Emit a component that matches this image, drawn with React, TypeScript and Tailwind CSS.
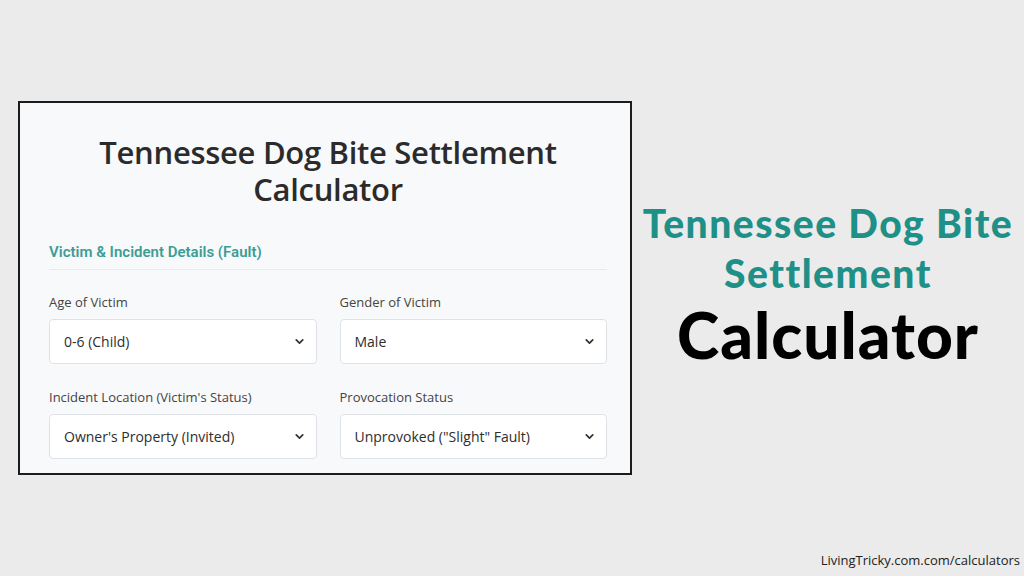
import React from "react";
import { ChevronDown } from "lucide-react";

const fields = [
  { label: "Age of Victim", value: "0-6 (Child)" },
  { label: "Gender of Victim", value: "Male" },
  { label: "Incident Location (Victim's Status)", value: "Owner's Property (Invited)" },
  { label: "Provocation Status", value: 'Unprovoked ("Slight" Fault)' },
];

function SelectField({ label, value }: { label: string; value: string }) {
  return (
    <div className="flex flex-col">
      <label className="text-[13px] leading-[18px] text-[#444] mb-[8px]">{label}</label>
      <div className="relative">
        <select
          defaultValue={value}
          className="w-full h-[45px] appearance-none bg-white border border-[#dfe2e6] rounded-[4px] pl-[14px] pr-8 text-[14px] text-[#2e2e2e] outline-none"
        >
          <option>{value}</option>
        </select>
        {/* chevron over the native select */}
        <ChevronDown
          size={13}
          strokeWidth={3.2}
          className="absolute right-[11px] top-[16px] text-[#333] pointer-events-none"
        />
      </div>
    </div>
  );
}

export default function App() {
  return (
    <div
      className="w-[1024px] h-[576px] bg-[#ebebeb] flex flex-col"
      style={{ fontFamily: '"Open Sans", "Noto Sans", sans-serif' }}
    >
      <div className="flex flex-1 items-start">
        {/* card with the calculator form */}
        <div className="ml-[18px] mt-[101px] w-[614px] h-[374px] bg-[#f8f9fa] border-2 border-[#1c1c1c] pl-[29px] pr-[23px] pt-[31px] overflow-hidden">
          <h1 className="text-center text-[31px] leading-[37px] font-semibold text-[#2b2b2b] tracking-[-0.3px]">
            <span className="block">Tennessee Dog Bite Settlement</span>
            <span className="block">Calculator</span>
          </h1>

          <h2
            className="mt-[33px] text-[15px] font-semibold text-[#3d9d95] pb-[5px] border-b border-[#e8eaec]"
            style={{ fontFamily: "Roboto, sans-serif" }}
          >
            Victim &amp; Incident Details (Fault)
          </h2>

          <div className="grid grid-cols-2 gap-x-[23px] gap-y-[24px] mt-[23px]">
            {fields.map((f) => (
              <SelectField key={f.label} label={f.label} value={f.value} />
            ))}
          </div>
        </div>

        {/* headline on the right */}
        <div className="flex-1 flex flex-col items-center mt-[198px]" style={{ fontFamily: "Lato, sans-serif" }}>
          <div className="text-[39px] leading-[50px] font-black text-[#1f9088] text-center tracking-[1.5px]">
            <span className="block">Tennessee Dog Bite</span>
            <span className="block">Settlement</span>
          </div>
          <div className="text-[64px] leading-[70px] font-black text-black mt-[2px] tracking-[1px]">Calculator</div>
        </div>
      </div>

      <div className="flex justify-end pr-[4px] pb-[6px]">
        <span className="text-[13px] text-[#222]">LivingTricky.com.com/calculators</span>
      </div>
    </div>
  );
}
